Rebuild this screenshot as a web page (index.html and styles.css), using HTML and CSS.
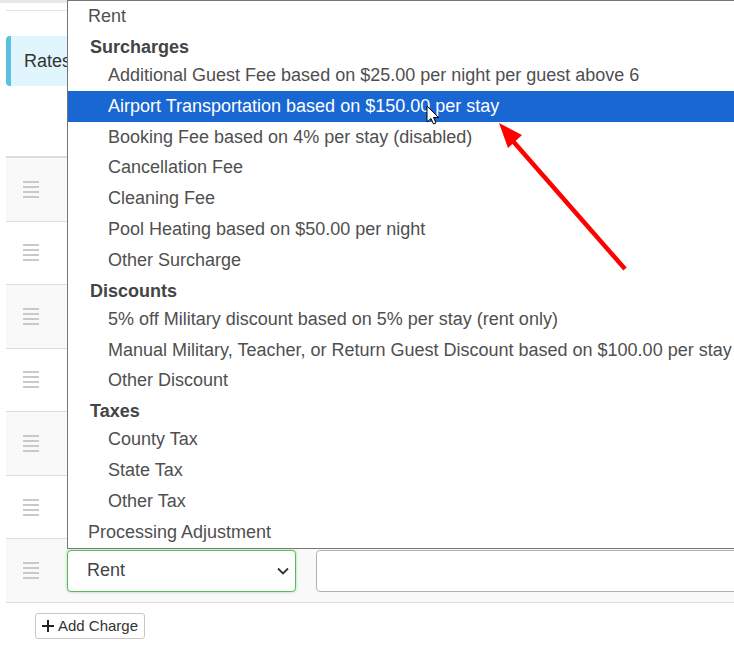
FILE: index.html
```html
<!DOCTYPE html>
<html>
<head>
<meta charset="utf-8">
<link rel="stylesheet" href="styles.css">
</head>
<body>
<div class="page">
  <div class="topstrip"></div>
  <div class="main">
    <div class="rule"></div>
    <div class="alert">Rates</div>
    <div class="thead"></div>
    <div class="rows">
      <div class="row alt"><div class="handle"><i></i><i></i><i></i><i></i></div><div class="sel"></div><div class="txt"></div></div>
      <div class="row"><div class="handle"><i></i><i></i><i></i><i></i></div><div class="sel"></div><div class="txt"></div></div>
      <div class="row alt"><div class="handle"><i></i><i></i><i></i><i></i></div><div class="sel"></div><div class="txt"></div></div>
      <div class="row"><div class="handle"><i></i><i></i><i></i><i></i></div><div class="sel"></div><div class="txt"></div></div>
      <div class="row alt"><div class="handle"><i></i><i></i><i></i><i></i></div><div class="sel"></div><div class="txt"></div></div>
      <div class="row"><div class="handle"><i></i><i></i><i></i><i></i></div><div class="sel"></div><div class="txt"></div></div>
      <div class="row alt"><div class="handle"><i></i><i></i><i></i><i></i></div>
        <div class="sel focus"><span>Rent</span>
          <svg class="chev" width="12" height="8" viewBox="0 0 12 8"><path d="M1 1.5 L6 6.5 L11 1.5" fill="none" stroke="#333" stroke-width="1.8"/></svg>
        </div>
        <div class="txt"></div></div>
    </div>
    <button class="add"><svg width="12" height="12" viewBox="0 0 12 12"><path d="M6 0 V12 M0 6 H12" stroke="#222" stroke-width="2"/></svg><span>Add Charge</span></button>
  </div>

  <div class="dropdown">
    <div class="opt top">Rent</div>
    <div class="grp">Surcharges</div>
    <div class="opt">Additional Guest Fee based on $25.00 per night per guest above 6</div>
    <div class="opt hl">Airport Transportation based on $150.00 per stay</div>
    <div class="opt">Booking Fee based on 4% per stay (disabled)</div>
    <div class="opt">Cancellation Fee</div>
    <div class="opt">Cleaning Fee</div>
    <div class="opt">Pool Heating based on $50.00 per night</div>
    <div class="opt">Other Surcharge</div>
    <div class="grp">Discounts</div>
    <div class="opt">5% off Military discount based on 5% per stay (rent only)</div>
    <div class="opt">Manual Military, Teacher, or Return Guest Discount based on $100.00 per stay</div>
    <div class="opt">Other Discount</div>
    <div class="grp">Taxes</div>
    <div class="opt">County Tax</div>
    <div class="opt">State Tax</div>
    <div class="opt">Other Tax</div>
    <div class="opt top">Processing Adjustment</div>
  </div>

  <svg class="overlay" width="734" height="650" viewBox="0 0 734 650">
    <line x1="625" y1="269" x2="512" y2="140" stroke="#ff0000" stroke-width="4.5"/>
    <polygon points="499,123 508,148 522,135" fill="#ff0000"/>
    <path d="M427 106 L427 122 L431 118.5 L433.5 124 L436 123 L433.5 117.5 L438.5 117.5 Z" fill="#fff" stroke="#000" stroke-width="1" stroke-linejoin="round"/>
  </svg>
</div>
</body>
</html>
```
FILE: styles.css
```css
html, body {
  margin: 0;
  padding: 0;
  overflow: hidden;
  background: #fff;
}
.page {
  position: relative;
  width: 734px;
  height: 650px;
  overflow: hidden;
  font-family: "Liberation Sans", Arial, sans-serif;
  color: #333;
}
.topstrip {
  height: 3px;
  background: #e8e8e8;
}
.main {
  margin-left: 6px;
  width: 1100px;
}
.rule {
  margin-top: 7px;
  height: 1px;
  background: #e3e3e3;
}
.alert {
  margin-top: 25px;
  height: 50px;
  box-sizing: border-box;
  border-left: 5px solid #5bc0de;
  border-radius: 4px;
  background: #e1f5fc;
  padding-left: 13px;
  font-size: 18px;
  line-height: 50px;
  color: #333;
}
.thead {
  height: 70px;
}
.rows {
  border-top: 2px solid #dddddd;
}
.row {
  height: 63.57px;
  box-sizing: border-box;
  border-bottom: 1px solid #dddddd;
  display: flex;
  align-items: center;
  background: #fff;
}
.row.alt {
  background: #f9f9f9;
}
.handle {
  margin-left: 17px;
  width: 16px;
  display: flex;
  flex-direction: column;
  gap: 3px;
}
.handle i {
  display: block;
  height: 2px;
  background: #c9c9c9;
}
.sel {
  margin-left: 28px;
  width: 229px;
  height: 42px;
  box-sizing: border-box;
  border: 1px solid #a9b3c0;
  border-radius: 4px;
  background: #fff;
  display: flex;
  align-items: center;
  padding-left: 19px;
  padding-right: 6px;
  font-size: 18px;
  color: #444;
}
.sel.focus {
  border-color: #5cb85c;
  box-shadow: 0 0 3px rgba(92, 184, 92, 0.55);
}
.sel span {
  flex: 1;
}
.chev {
  display: block;
}
.txt {
  margin-left: 20px;
  flex: 1;
  height: 42px;
  box-sizing: border-box;
  border: 1px solid #a9b3c0;
  border-radius: 4px;
  background: #fff;
}
.add {
  margin: 10px 0 0 29px;
  height: 26px;
  width: 110px;
  box-sizing: border-box;
  border: 1px solid #c8c8c8;
  border-radius: 3px;
  background: #fff;
  padding: 0 0 0 6px;
  display: flex;
  align-items: center;
  gap: 4px;
  font-family: "Liberation Sans", Arial, sans-serif;
  font-size: 15px;
  color: #333;
}
.add svg {
  display: block;
}
.dropdown {
  position: absolute;
  left: 67px;
  top: 0;
  width: 800px;
  box-sizing: border-box;
  border: 1px solid #767676;
  background: #fff;
  font-size: 18px;
  color: #4f4f4f;
}
.opt, .grp {
  height: 30.85px;
  line-height: 30.85px;
  white-space: nowrap;
  padding-left: 40px;
}
.opt.top {
  padding-left: 20px;
}
.grp {
  height: 28px;
  line-height: 31px;
  padding-left: 22px;
  font-weight: bold;
  color: #444;
}
.opt.hl {
  background: #1967d2;
  color: #fff;
}
.overlay {
  position: absolute;
  left: 0;
  top: 0;
  pointer-events: none;
}
```
